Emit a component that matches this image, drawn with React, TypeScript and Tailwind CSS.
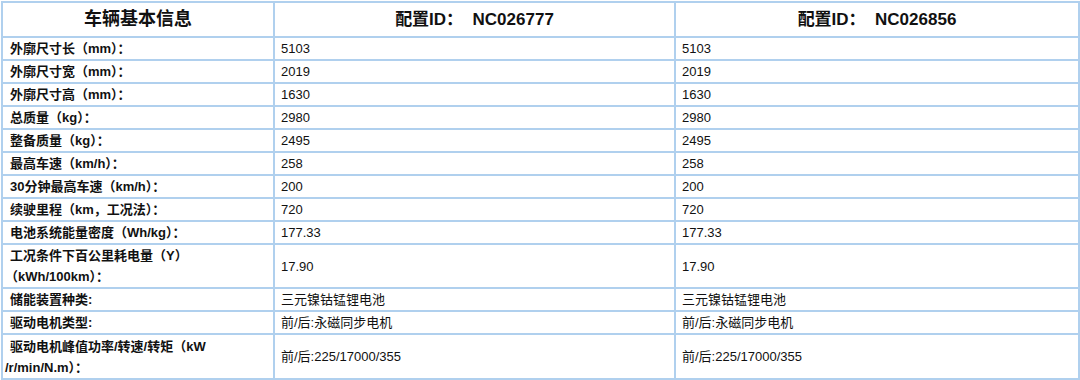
import React from "react";

type Row = {
  label: React.ReactNode;
  a: string;
  b: string;
  tall?: boolean;
};

const rows: Row[] = [
  { label: "外廓尺寸长（mm）：", a: "5103", b: "5103" },
  { label: "外廓尺寸宽（mm）：", a: "2019", b: "2019" },
  { label: "外廓尺寸高（mm）：", a: "1630", b: "1630" },
  { label: "总质量（kg）：", a: "2980", b: "2980" },
  { label: "整备质量（kg）：", a: "2495", b: "2495" },
  { label: "最高车速（km/h）：", a: "258", b: "258" },
  { label: "30分钟最高车速（km/h）：", a: "200", b: "200" },
  { label: "续驶里程（km，工况法）：", a: "720", b: "720" },
  { label: "电池系统能量密度（Wh/kg）：", a: "177.33", b: "177.33" },
  {
    label: (
      <>
        工况条件下百公里耗电量（Y）
        <br />
        （kWh/100km）：
      </>
    ),
    a: "17.90",
    b: "17.90",
    tall: true,
  },
  { label: "储能装置种类:", a: "三元镍钴锰锂电池", b: "三元镍钴锰锂电池" },
  { label: "驱动电机类型:", a: "前/后:永磁同步电机", b: "前/后:永磁同步电机" },
  {
    label: (
      <>
        驱动电机峰值功率/转速/转矩（kW
        <br />
        /r/min/N.m）：
      </>
    ),
    a: "前/后:225/17000/355",
    b: "前/后:225/17000/355",
    tall: true,
  },
];

const cell = "border-2 border-[#b0d0ee] align-middle";

export default function App() {
  return (
    <div
      className="w-[1080px] h-[380px] bg-white pl-[1px] pt-[1px] text-[#111]"
      style={{ fontFamily: '"Liberation Sans", "Noto Sans CJK SC", sans-serif' }}
    >
      <table className="w-[1077px] table-fixed border-collapse">
        <colgroup>
          <col className="w-[272px]" />
          <col className="w-[401px]" />
          <col className="w-[404px]" />
        </colgroup>
        <thead>
          <tr className="h-[35px]">
            <th className={`${cell} text-center text-[18px] font-bold`}>车辆基本信息</th>
            <th className={`${cell} text-center text-[17px] font-bold`}>
              配置ID：&nbsp;&nbsp;NC026777
            </th>
            <th className={`${cell} text-center text-[17px] font-bold`}>
              配置ID：&nbsp;&nbsp;NC026856
            </th>
          </tr>
        </thead>
        <tbody className="text-[13px]">
          {rows.map((r, i) => (
            <tr
              key={i}
              className={r.tall ? (i === rows.length - 1 ? "h-[45px] leading-[21px]" : "h-[44px] leading-[21px]") : "h-[23px] leading-[18px]"}
            >
              <td className={`${cell} pl-[2px] indent-[5px] font-bold`}>{r.label}</td>
              <td className={`${cell} pl-[6px]`}>{r.a}</td>
              <td className={`${cell} pl-[6px]`}>{r.b}</td>
            </tr>
          ))}
        </tbody>
      </table>
    </div>
  );
}
